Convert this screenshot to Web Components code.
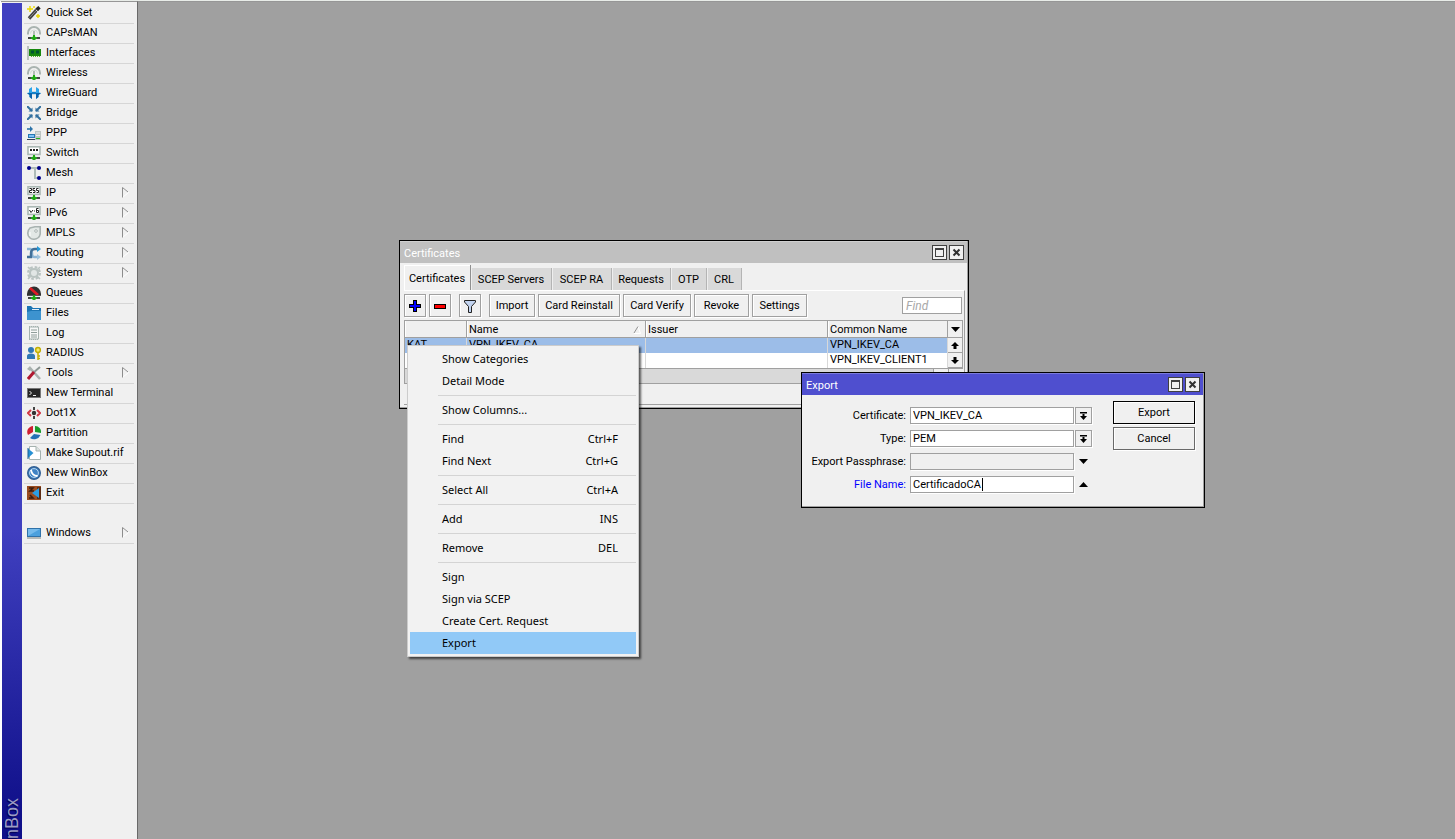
<!DOCTYPE html>
<html lang="en">
<head>
<meta charset="utf-8">
<title>WinBox</title>
<style>
html,body{height:100%;margin:0}
body{font:11px/14px Roboto,"Liberation Sans",sans-serif;color:#000;overflow:hidden;background:#fff}
</style>
</head>
<body>
<winbox-app></winbox-app>
<script>
const define = (name, html) => customElements.define(name, class extends HTMLElement {
  connectedCallback() {
    if (this.shadowRoot) return;
    this.attachShadow({ mode: "open" }).innerHTML = typeof html === "function" ? html(this) : html;
  }
});

/* All glyphs live on a 14 x 14 grid. */
const dish = '<path d="M1 8.500V7A6 6 0 0 1 13 7V8.500" fill="none" stroke="#a9b3b0" stroke-width="2"/><path d="M3.500 7.500A3.500 3.500 0 0 1 10.500 7.500" fill="none" stroke="#d5dbd9"/>';
const plug = '<path d="M1 12h4M9 12h4" stroke="#444" stroke-width="2"/><path d="M4 12h6" stroke="#3c3" stroke-width="1"/><path d="M6 9h2v1.500L10 12 8 14H6L4 12l2-1.500z" fill="#1eaa14"/>';
const screen = '<rect x="1" y=".8" width="12" height="7.6" fill="#fff" stroke="#aab8b4" stroke-width="1.6"/>';
const icons = {
  wand: '<path d="M2 12.5 10.5 3" stroke="#444" stroke-width="3.4"/><path d="m10 3.600 2.500-2.400" stroke="#222" stroke-width="3.400"/><path d="m8.8 3.8 2.2 2" stroke="#eee"/><path d="M2.6 11.6 9 4.8" stroke="#888"/><path d="M3 0v6M0 3h6M11 8v4M9 10h4M7 0v2" stroke="#ead800" stroke-width="1.4"/>',
  dish: dish + '<path d="M7 5v5" stroke="#9aa5a2" stroke-width="1.4"/>' + plug,
  nic: '<path d="M1 0v14" stroke="#aab5b2" stroke-width="1.6"/><rect x="2" y="3" width="12" height="7" fill="#17880e"/><path d="M4 4.5h3v3H4zM9 4.5h3v3H9z" fill="#053"/><path d="M4 10.5h9" stroke="#55b52e" stroke-dasharray="1 1"/>',
  guard: '<path d="M5 1v12L2.500 11V9L0 7l2-.500V3zM9 1v12l2.500-2V9L14 7l-2-.500V3z" fill="#2ba4ea"/><path d="M5 7v6l-2.500-2V9L0 7zM9 7v6l2.500-2V9L14 7z" fill="#0a62aa"/><path d="M5 7h4" stroke="#1580c8" stroke-width="2.400"/>',
  bridge: '<path d="m0 0 5 5M14 0 9 5M0 14l5-5M14 14 9 9" stroke="#33709f" stroke-width="2"/><path d="M5.5 1.5v4h-4zM8.5 1.5v4h4zM5.5 12.5v-4h-4zM8.5 12.5v-4h4z" fill="#33709f"/>',
  ppp: '<path d="M0 3h4" stroke="#2c73a8" stroke-width="1.6"/><path d="M3 0v6l3-3z" fill="#2c73a8"/><rect x="1.5" y="8.5" width="6" height="3" fill="#7ec0f5" stroke="#2677b3"/><path d="M0 13.5h9" stroke="#345"/><rect x="8" y="5" width="6" height="9" fill="#bcc4c2"/><path d="M9 7h4M9 9.500h4" stroke="#eee"/><path d="M9 12.500h4" stroke="#28b020"/>',
  switch: screen + '<path d="M3 4h2M6 4h2M9 4h2" stroke="#222" stroke-width="2"/>' + plug,
  mesh: '<path d="M3 2h5v10h4M8 2h3" fill="none" stroke="#aebbb8" stroke-width="2"/><circle cx="2" cy="2" r="2" fill="#00008b"/><circle cx="12" cy="2" r="2" fill="#00008b"/><circle cx="12" cy="12" r="2" fill="#00008b"/>',
  ip: screen + '<path d="M2.500 2.500h2v2h-2v2h2.500M8 2.500H6v2h2v2H6M11.500 2.500h-2v2h2v2h-2" fill="none" stroke="#222"/>' + plug,
  ip6: screen + '<path d="m2.500 4 1.500 2.500L6 4M7 5h1M11.500 2.500h-2v4h2v-2h-2" fill="none" stroke="#222"/>' + plug,
  mpls: '<path d="M3 2 8 .8h5.200V8A6.200 6.200 0 0 1 7 13.200 6 6 0 0 1 .800 7Q.800 4 3 2z" fill="#e3e8e6" stroke="#a8b2b0" stroke-width="1.600"/><circle cx="9" cy="5" r="1.300" fill="#fff" stroke="#a8b2b0"/><path d="M3 6v4" stroke="#fff"/>',
  routing: '<path d="M0 3h3q2 0 2 4t2 4h4" fill="none" stroke="#8db6d6" stroke-width="2.400"/><path d="M0 11h4V7q0-4 4-4h3" fill="none" stroke="#416f98" stroke-width="2.400"/><path d="M10 0v6l4-3z" fill="#2798d6"/><path d="M10 8v6l4-3z" fill="#9fc3dc"/>',
  gear: '<circle cx="7" cy="7" r="5.800" fill="none" stroke="#b9c3c1" stroke-width="2.400" stroke-dasharray="2.600 1.950"/><circle cx="7" cy="7" r="4" fill="#e1e6e5" stroke="#b9c3c1" stroke-width="2"/><path d="M1 1l3 3M13 1l-3 3M1 13l3-3M13 13l-3-3" stroke="#b9c3c1" stroke-width="1.600"/>',
  queues: '<path d="M0 8A7 7.500 0 0 1 14 8V10H0z" fill="#303030"/><path d="m3 2 8 7" stroke="#df1c25" stroke-width="2.600"/><path d="M0 9.500h14" stroke="#555"/>' + plug,
  files: '<path d="M0 0h4l2 2h8v12H0z" fill="#1c75b4"/><path d="M4 5h10v9H0V6z" fill="#3d93cf"/><path d="M5 3.500h7" stroke="#e0edf7"/>',
  log: '<path d="M2.500 1h9v12h-9z" fill="#f7f8f8" stroke="#a5b2af"/><path d="M2 .500h10M2 13.500h10" stroke="#a5b2af" stroke-dasharray="1 1"/><path d="M4 4h6M4 6.500h6M4 9h6M4 11h6" stroke="#8f9d9a"/>',
  radius: '<circle cx="4" cy="4" r="3" fill="#2f78b5"/><path d="M0 13V10q0-2.500 4-2.500T8 10v3z" fill="#2f78b5"/><circle cx="11" cy="4" r="2.400" fill="#f1e970" stroke="#c3ae00" stroke-width="1.500"/><path d="M11 6v8M11 10h2M11 12.500h2" stroke="#c3ae00" stroke-width="1.500"/>',
  tools: '<path d="m3 2 10 11" stroke="#aab2b0" stroke-width="2.600"/><path d="M0 3 3 0l2 3-2 2z" fill="#aab2b0"/><path d="M6 7 13 1" stroke="#8e9895" stroke-width="2"/><path d="m1 13 6-7" stroke="#b01830" stroke-width="3"/>',
  terminal: '<rect x=".500" y="2.500" width="13" height="9" fill="#262626" stroke="#777"/><path d="m2.500 5 2 2-2 2M6 9.500h3" fill="none" stroke="#eee"/>',
  dot1x: '<path d="M4 4 1 7l3 3M10 4l3 3-3 3" fill="none" stroke="#d03845" stroke-width="2"/><path d="M7 1v3M7 10v3" stroke="#444" stroke-width="2"/><circle cx="7" cy="7" r="2.200" fill="#333"/>',
  partition: '<path d="M6 6V0A6 6 0 0 0 1 9z" fill="#cf1f32"/><path d="M8 6V0a6 6 0 0 1 6 7z" fill="#199c2b"/><path d="m7 8 6.500 1A7 7 0 0 1 3 12z" fill="#2370b5"/>',
  supout: '<path d="M2.500.500H9l4.500 4.500v8.500h-11z" fill="#fff" stroke="#a5b2af"/><path d="M9 .500V5h4.500" fill="#dde3e1" stroke="#a5b2af"/><path d="M1 2.500 6.500 7 1 12z" fill="#2690d3"/><path d="M1 2v11" stroke="#1b5e92"/>',
  winbox: '<circle cx="7" cy="7" r="6.300" fill="#3f82c4" stroke="#315f93" stroke-width="1.400"/><circle cx="7" cy="7" r="4.400" fill="none" stroke="#b9d6ef"/><path d="M4 4q1 6 6.500 6" fill="none" stroke="#fff" stroke-width="1.800"/>',
  exit: '<path d="M0 0h14v14H0z" fill="#9b4d20"/><path d="M2 2h4L3 5h4M2 12h4L3 9" fill="none" stroke="#3b1c0c" stroke-width="1.500"/><path d="M10 1h4v12h-4z" fill="#5e2c12"/><path d="M12 2v10L5 7z" fill="#2b9ee2"/>',
  windows: '<rect x=".500" y="2.500" width="13" height="8" fill="#4ba0dd" stroke="#2f72a9"/><path d="M1 10 13 3H1z" fill="#75baeb"/><path d="M0 12h14" stroke="#7a8380"/>',
};
define("wb-icon", el => `<style>:host{display:block;width:14px;height:14px}svg{display:block}</style>
<svg width="14" height="14" viewBox="0 0 14 14" aria-hidden="true">${icons[el.getAttribute("name")]}</svg>`);

define("nav-item", el => `<style>
:host{display:block}
a{display:flex;align-items:center;gap:5px;box-sizing:border-box;height:20px;padding:0 5px 1px 3px;border-bottom:1px solid #d6d6d6;color:#000;text-decoration:none;white-space:nowrap}
span{flex:1}
</style><a href="#"><wb-icon name="${el.getAttribute("icon")}"></wb-icon><span><slot></slot></span>${
el.hasAttribute("more") ? '<svg width="7" height="12" viewBox="0 0 7 12" aria-hidden="true"><path d="m.500.500 6 5-6 5" fill="none" stroke="#fff"/><path d="M.500 10.500V.500l5.500 4.500" fill="none" stroke="#8c8c8c"/></svg>' : ""}</a>`);

define("side-bar", `<style>
:host{display:flex;width:136px;flex:none;border-right:1px solid #696969;background:#f0f0f0;margin-left:1px}
.brand{width:20px;flex:none;margin-top:1px;display:flex;flex-direction:column;justify-content:flex-end;align-items:center;background:linear-gradient(#4040c0 63%,#10108a 97%);border-left:1px solid #fff}
.brand b{writing-mode:vertical-rl;transform:rotate(180deg);font:18px/20px "Liberation Sans",sans-serif;color:#9c9cc4;text-shadow:-1px -1px 1px #00004c}
nav{flex:1;padding:2px 3px 0 2px}
.gap{height:20px}
</style>
<div class="brand"><b>nBox</b></div>
<nav aria-label="Main">
<nav-item icon="wand">Quick Set</nav-item><nav-item icon="dish">CAPsMAN</nav-item><nav-item icon="nic">Interfaces</nav-item><nav-item icon="dish">Wireless</nav-item><nav-item icon="guard">WireGuard</nav-item><nav-item icon="bridge">Bridge</nav-item><nav-item icon="ppp">PPP</nav-item><nav-item icon="switch">Switch</nav-item><nav-item icon="mesh">Mesh</nav-item><nav-item icon="ip" more>IP</nav-item><nav-item icon="ip6" more>IPv6</nav-item><nav-item icon="mpls" more>MPLS</nav-item><nav-item icon="routing" more>Routing</nav-item><nav-item icon="gear" more>System</nav-item><nav-item icon="queues">Queues</nav-item><nav-item icon="files">Files</nav-item><nav-item icon="log">Log</nav-item><nav-item icon="radius">RADIUS</nav-item><nav-item icon="tools" more>Tools</nav-item><nav-item icon="terminal">New Terminal</nav-item><nav-item icon="dot1x">Dot1X</nav-item><nav-item icon="partition">Partition</nav-item><nav-item icon="supout">Make Supout.rif</nav-item><nav-item icon="winbox">New WinBox</nav-item><nav-item icon="exit">Exit</nav-item>
<div class="gap"></div>
<nav-item icon="windows" more>Windows</nav-item>
</nav>`);

define("wb-window", el => `<style>
:host{display:flex;flex-direction:column;box-sizing:border-box;border:1px solid #000;background:#f0f0f0;box-shadow:inset -1px -1px #a0a0a0}
header{display:flex;align-items:center;gap:2px;height:22px;padding:0 3px 0 4px;color:#fff;background:var(--title,#c0c0c0);box-shadow:inset 0 1px #ffffff40;margin-right:1px}
h2{flex:1;margin:0;font:inherit;padding-top:4px}
button{width:15px;height:15px;padding:0;border:1px solid #404040;background:#f0f0f0;display:grid;place-items:center}
</style><header><h2>${el.getAttribute("label")}</h2>
<button aria-label="Maximize"><svg width="9" height="9" shape-rendering="crispEdges"><path d="M.500.500h8v8h-8zM0 1.500h9" fill="none" stroke="#404040"/></svg></button>
<button aria-label="Close"><svg width="9" height="9"><path d="m1.500 1.500 6 6M7.500 1.500l-6 6" stroke="#303030" stroke-width="2"/></svg></button>
</header><slot></slot>`);

define("tool-button", el => `<style>
:host{display:block}
button{font:inherit;color:inherit;box-sizing:border-box;width:100%;height:23px;padding:1px 0 0;border:1px solid #a0a0a0;background:#f0f0f0;box-shadow:inset 1px 1px #fff,1px 1px #fff;display:flex;align-items:center;justify-content:center}
</style><button aria-label="${el.getAttribute("label") || el.textContent.trim()}"><slot></slot></button>`);

define("cert-table", `<style>
:host{display:flex;border:1px solid #a0a0a0;border-width:1px 0 0 1px}
table{flex:1;table-layout:fixed;border-collapse:separate;border-spacing:0;background:#fff}
th,td{box-sizing:border-box;padding:0 2px;text-align:left;font-weight:400;white-space:nowrap;overflow:hidden;line-height:14px}
th{height:17px;padding-top:1px;background:#f0f0f0;border-right:1px solid #a0a0a0;border-bottom:1px solid #a0a0a0;box-shadow:inset 1px 0 #fff}
td{height:15px;padding-bottom:1px;border-right:1px solid #d8d8d8}
.sel td{background:#9cbde8}
th div{display:flex;align-items:center;justify-content:space-between;padding-right:2px}
.bar{width:15px;flex:none;display:flex;flex-direction:column}
button{height:15px;padding:0;border:0;border-right:1px solid #a0a0a0;border-bottom:1px solid #a0a0a0;background:#f0f0f0;display:grid;place-items:center}
button:first-child{height:17px}
</style>
<table><colgroup><col style="width:62px"><col style="width:179px"><col style="width:182px"><col></colgroup>
<thead><tr><th></th><th><div>Name<svg width="8" height="8" viewBox="0 0 8 8" aria-hidden="true"><path d="M1 7.500h6.500L5 .500" fill="none" stroke="#fff"/><path d="M1 7 5 .500" stroke="#909090" fill="none"/></svg></div></th><th>Issuer</th><th>Common Name</th></tr></thead>
<tbody><tr class="sel"><td>KAT</td><td>VPN_IKEV_CA</td><td></td><td>VPN_IKEV_CA</td></tr><tr><td></td><td></td><td></td><td>VPN_IKEV_CLIENT1</td></tr></tbody></table>
<div class="bar"><button aria-label="Columns"><svg width="9" height="5"><path d="M0 0h9L4.500 5z"/></svg></button>
<button aria-label="Scroll up"><svg width="8" height="7"><path d="M4 0 8 4H5.500v3h-3V4H0z"/></svg></button>
<button aria-label="Scroll down"><svg width="8" height="7"><path d="M4 7 8 3H5.500V0h-3v3H0z"/></svg></button></div>`);

define("cert-panel", `<style>
:host{display:flex;flex-direction:column;flex:1;padding:2px 3px 3px 4px}
.tabs{display:flex;align-items:flex-end;height:25px}
.tabs button{font:inherit;box-sizing:border-box;height:22px;padding:2px 0 0;border:0;border-right:1px solid #b4b4b4;background:#d9d9d9;box-shadow:inset 1px 0 #eee}
.tabs button.on{height:25px;background:#f0f0f0;border-right-color:#909090;box-shadow:inset 1px 1px #fff}
section{flex:1;display:flex;flex-direction:column;border-top:1px solid #fff;border-right:1px solid #a0a0a0;border-bottom:1px solid #a0a0a0;padding:3px 1px 0 0}
.tools{display:flex;align-items:center;gap:3px;padding-bottom:3px}
.i{width:22px}
.gap{margin-left:5px}
input{font:italic 12px/14px Roboto,sans-serif;box-sizing:border-box;width:60px;height:17px;margin-left:auto;margin-right:1px;border:1px solid #a0a0a0;padding:0 3px;border-radius:0;background:#fff;outline:0}
input::placeholder{color:#a8a8a8;opacity:1}
.scroll{height:14px;background:#d9d9d9;border:1px solid #a0a0a0;border-width:1px 0 1px 1px;display:flex;justify-content:flex-end}
.scroll i{width:14px;background:#f0f0f0;border-left:1px solid #a0a0a0}
</style>
<div class="tabs" role="tablist"><button class="on" role="tab" aria-selected="true" style="width:67px">Certificates</button><button role="tab" style="width:81px">SCEP Servers</button><button role="tab" style="width:60px">SCEP RA</button><button role="tab" style="width:59px">Requests</button><button role="tab" style="width:36px">OTP</button><button role="tab" style="width:35px">CRL</button></div>
<section><div class="tools">
<tool-button class="i" label="Add"><svg width="12" height="12" shape-rendering="crispEdges"><path d="M4.500.500h3v4h4v3h-4v4h-3v-4h-4v-3h4z" fill="#00f" stroke="#000"/></svg></tool-button>
<tool-button class="i" label="Remove"><svg width="12" height="5" shape-rendering="crispEdges"><path d="M.500.500h11v4H.500z" fill="#f00" stroke="#000"/></svg></tool-button>
<tool-button class="i gap" label="Filter"><svg width="12" height="13"><path d="M.500.500h11v1.500L7.500 6.500v6h-3v-6L.500 2z" fill="#c3d4f0" stroke="#222"/></svg></tool-button>
<tool-button class="gap" style="width:46px">Import</tool-button><tool-button style="width:82px">Card Reinstall</tool-button><tool-button style="width:68px">Card Verify</tool-button><tool-button style="width:55px">Revoke</tool-button><tool-button style="width:55px">Settings</tool-button>
<input aria-label="Find" placeholder="Find"></div>
<cert-table></cert-table><div class="scroll"><i></i><i></i></div></section>`);

define("export-form", `<style>
:host{display:flex;justify-content:space-between;align-items:flex-start;padding:6px 9px 0 8px}
.fields{display:grid;grid-template-columns:96px 164px 17px;gap:6px 2px;align-items:center;margin-top:6px}
label{text-align:right;white-space:nowrap}
.blue{color:#00f}
input,select{font:inherit;color:#000;appearance:none;box-sizing:border-box;width:100%;height:17px;border:1px solid #a0a0a0;border-radius:0;background:#fff;padding:0 2px;box-shadow:1px 1px #fff;outline:0;display:block}
input:disabled{background:#f0f0f0}
.f{position:relative;margin-left:2px;width:164px}
.caret{position:absolute;left:72px;top:2px;width:1px;height:13px;background:#000}
.fields button{width:17px;height:17px;padding:0;border:1px solid #a0a0a0;background:#f0f0f0;display:grid;place-items:center;box-shadow:1px 1px #fff;margin-left:1px}
.fields button.bare{border-color:transparent;box-shadow:none}
.acts{display:grid;gap:3px;width:82px}
.acts button{font:inherit;height:23px;padding:1px 0 0;border:1px solid #696969;background:#f0f0f0;box-shadow:inset 1px 1px #fff,1px 1px #fff}
.acts button:first-child{border-color:#000}
</style>
<div class="fields">
<label for="c">Certificate:</label><div class="f"><select id="c"><option>VPN_IKEV_CA</option><option>VPN_IKEV_CLIENT1</option></select></div><button aria-label="Choose certificate"><svg width="7" height="8"><path d="M0 0h7v1.500H0zM2.500 2h2v2H7L3.500 8 0 4h2.500z"/></svg></button>
<label for="t">Type:</label><div class="f"><select id="t"><option>PEM</option></select></div><button aria-label="Choose type"><svg width="7" height="8"><path d="M0 0h7v1.500H0zM2.500 2h2v2H7L3.500 8 0 4h2.500z"/></svg></button>
<label for="p">Export Passphrase:</label><div class="f"><input id="p" type="password" disabled></div><button class="bare" aria-label="Show passphrase"><svg width="9" height="5"><path d="M0 0h9L4.500 5z"/></svg></button>
<label class="blue" for="n">File Name:</label><div class="f"><input id="n" value="CertificadoCA"><span class="caret"></span></div><button class="bare" aria-label="Clear file name"><svg width="9" height="5"><path d="M0 5h9L4.500 0z"/></svg></button>
</div>
<div class="acts"><button>Export</button><button>Cancel</button></div>`);

define("menu-item", el => `<style>
:host{display:block}
button{font:inherit;color:inherit;width:100%;height:22px;padding:0 18px 0 32px;border:0;background:none;display:flex;align-items:center;justify-content:space-between}
:host([active]) button{background:#91c9f7}
</style><button role="menuitem"><slot></slot>${el.hasAttribute("keys") ? `<span>${el.getAttribute("keys")}</span>` : ""}</button>`);

define("context-menu", `<style>
:host{display:block;box-sizing:border-box;background:#f2f2f2;border:1px solid #ccc;padding:2px;font:11px/16px "Noto Sans","Open Sans",sans-serif;box-shadow:2px 2px 2px #0009}
hr{border:0;height:1px;margin:3px 0 3px 28px;background:#d4d4d4}
</style><div role="menu">
<menu-item>Show Categories</menu-item><menu-item>Detail Mode</menu-item><hr>
<menu-item>Show Columns...</menu-item><hr>
<menu-item keys="Ctrl+F">Find</menu-item><menu-item keys="Ctrl+G">Find Next</menu-item><hr>
<menu-item keys="Ctrl+A">Select All</menu-item><hr>
<menu-item keys="INS">Add</menu-item><hr>
<menu-item keys="DEL">Remove</menu-item><hr>
<menu-item>Sign</menu-item><menu-item>Sign via SCEP</menu-item><menu-item>Create Cert. Request</menu-item><menu-item active>Export</menu-item>
</div>`);

define("winbox-app", `<style>
:host{display:flex;height:100vh;box-sizing:border-box;border-top:1px solid #e8ece8}
main{flex:1;position:relative;background:#a0a0a0;overflow:hidden}
main,side-bar{border-top:1px solid #969696}
wb-window,context-menu{position:absolute}
.certs{left:261px;top:238px;width:570px;height:169px}
.export{left:663px;top:370px;width:404px;height:136px;--title:#4f4fcf}
context-menu{left:269px;top:343px;width:232px}
</style>
<side-bar></side-bar>
<main>
<wb-window class="certs" label="Certificates"><cert-panel></cert-panel></wb-window>
<wb-window class="export" label="Export"><export-form></export-form></wb-window>
<context-menu></context-menu>
</main>`);
</script>
</body>
</html>
